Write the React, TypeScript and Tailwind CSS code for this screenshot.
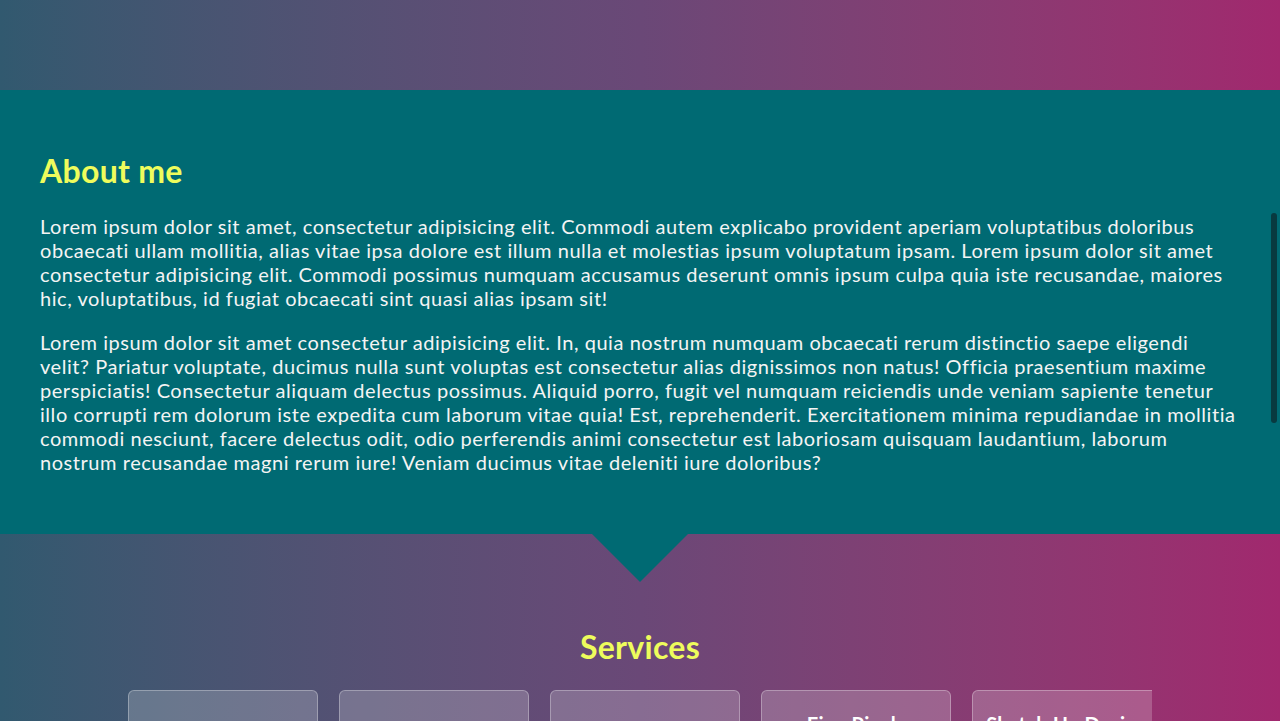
import React from "react";

const font = { fontFamily: "Lato, 'Open Sans', sans-serif" };

const longText =
  "Lorem ipsum dolor sit amet consectetur adipisicing elit. Quia nostrum numquam obcaecati rerum distinctio saepe eligendi velit pariatur voluptate, ducimus nulla sunt voluptas est consectetur alias dignissimos non natus officia praesentium maxime perspiciatis.";

const services = [
  { title: "Web Design", text: "" },
  { title: "Branding", text: "" },
  { title: "Logo Design", text: "" },
  { title: "Fine Pixels", text: longText },
  { title: "Sketch Up Design", text: longText },
];

export default function App() {
  return (
    <div
      className="relative h-[721px] w-[1280px] overflow-hidden bg-gradient-to-r from-[#31596f] via-[#6a4877] to-[#a1286e] text-[#f4f4f4]"
      style={font}
    >
      <header className="h-[90px]" />
      <section className="relative bg-[#006a73] px-10 pt-[63px] pb-[60px]">
        <h2 className="text-[32px] leading-[36px] font-bold tracking-[0.3px] text-[#eefc5c]">About me</h2>
        <p className="mt-[25px] text-[20px] leading-[24px] tracking-[0.55px]">
          Lorem ipsum dolor sit amet, consectetur adipisicing elit. Commodi autem explicabo provident aperiam voluptatibus doloribus obcaecati ullam mollitia, alias vitae ipsa dolore est illum nulla et molestias ipsum voluptatum ipsam. Lorem ipsum dolor sit amet consectetur adipisicing elit. Commodi possimus numquam accusamus deserunt omnis ipsum culpa quia iste recusandae, maiores hic, voluptatibus, id fugiat obcaecati sint quasi alias ipsam sit!
        </p>
        <p className="mt-[20px] text-[20px] leading-[24px] tracking-[0.55px]">
          Lorem ipsum dolor sit amet consectetur adipisicing elit. In, quia nostrum numquam obcaecati rerum distinctio saepe eligendi velit? Pariatur voluptate, ducimus nulla sunt voluptas est consectetur alias dignissimos non natus! Officia praesentium maxime perspiciatis! Consectetur aliquam delectus possimus. Aliquid porro, fugit vel numquam reiciendis unde veniam sapiente tenetur illo corrupti rem dolorum iste expedita cum laborum vitae quia! Est, reprehenderit. Exercitationem minima repudiandae in mollitia commodi nesciunt, facere delectus odit, odio perferendis animi consectetur est laboriosam quisquam laudantium, laborum nostrum recusandae magni rerum iure! Veniam ducimus vitae deleniti iure doloribus?
        </p>
        <div className="absolute left-1/2 top-full h-0 w-0 -translate-x-1/2 border-x-[48px] border-t-[48px] border-x-transparent border-t-[#006a73]" />
      </section>
      <section className="pt-[95px]">
        <h2 className="text-center text-[32px] leading-[36px] font-bold tracking-[0.3px] text-[#eefc5c]">Services</h2>
        <div className="mx-auto mt-[25px] flex w-[1024px] gap-[21px] overflow-hidden">
          {services.map((s) => (
            <div
              key={s.title}
              className="flex h-[260px] w-[190px] shrink-0 flex-col justify-center-safe gap-3 overflow-hidden rounded-[6px] border border-white/30 bg-white/20 px-2 py-[20px] text-center"
            >
              <h3 className="text-[20px] leading-[26px] font-bold tracking-[0.3px] text-white">{s.title}</h3>
              {s.text && <p className="px-2 text-[15px] leading-[22px]">{s.text}</p>}
            </div>
          ))}
        </div>
      </section>
      <div className="absolute right-[3px] top-[213px] h-[210px] w-[6px] rounded-full bg-[#083a40]" />
    </div>
  );
}
